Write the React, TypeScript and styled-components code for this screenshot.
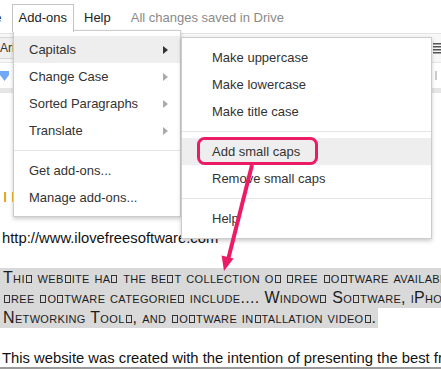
import React from "react";
import styled, { createGlobalStyle } from "styled-components";

const GlobalStyle = createGlobalStyle`
  html, body {
    margin: 0;
    padding: 0;
    background: #fff;
    overflow: hidden;
  }
  body {
    font-family: "Liberation Sans", Arial, sans-serif;
  }
`;

const Screen = styled.div`
  position: relative;
  width: 441px;
  height: 369px;
  overflow: hidden;
  background: #fff;
`;

const MenuBar = styled.div`
  display: flex;
  align-items: flex-start;
  height: 33px;
  border-bottom: 1px solid #e3e3e3;
  font-size: 13px;
  color: #222;
  white-space: nowrap;
`;

const BarItem = styled.div<{ $gap?: number }>`
  margin-top: 4px;
  margin-left: ${(p) => p.$gap ?? 10}px;
  line-height: 27px;
`;

const ActiveTab = styled.div`
  position: relative;
  z-index: 3;
  margin-top: 4px;
  margin-left: 10px;
  height: 27px;
  padding: 0 6px;
  line-height: 25px;
  background: #fff;
  border: 1px solid #c4c4c4;
  border-bottom: none;
`;

const Status = styled(BarItem)`
  color: #8a8a8a;
`;

const Toolbar = styled.div`
  display: flex;
  justify-content: space-between;
  align-items: center;
  height: 28px;
  background: #f7f7f7;
  border-bottom: 1px solid #e6e6e6;
`;

const FontBox = styled.div`
  margin-left: -6px;
  width: 60px;
  height: 20px;
  line-height: 20px;
  padding-left: 5px;
  font-size: 12px;
  color: #333;
  background: #efefef;
  border: 1px solid #d6d6d6;
`;

const Ruler = styled.div`
  display: flex;
  justify-content: space-between;
  height: 17px;
  padding-top: 8px;
  border-bottom: 5px solid #e6e6e6;
`;

const Marker = styled.svg`
  display: block;
`;

const Doc = styled.div`
  padding: 94px 0 0 2px;
  font-size: 14.8px;
  line-height: 20px;
  color: #111;
  white-space: nowrap;
`;

const Title = styled.div`
  color: #cc8400;
  padding-left: 1px;
`;

const Para = styled.div<{ $top: number }>`
  margin-top: ${(p) => p.$top}px;
`;

const SmallCaps = styled.div`
  margin-top: 20px;
  margin-left: -2px;
  font-size: 16px;
  letter-spacing: 0.33px;
  font-variant: small-caps;
  color: #1c1c1c;
`;

const Highlight = styled.span`
  display: inline-block;
  height: 20px;
  padding-left: 3px;
  padding-right: 2px;
  background: #d9d9d9;
`;

const Tofu = styled.span`
  display: inline-block;
  box-sizing: border-box;
  width: 6px;
  height: 8px;
  margin: 0 1px;
  border: 1px solid #333;
`;

const FootShadow = styled.div`
  position: absolute;
  left: 0;
  right: 0;
  bottom: 0;
  height: 2px;
  background: #9a9a9a;
`;

const Menu = styled.div<{ $left: number; $top: number; $width: number; $inset: number }>`
  position: absolute;
  z-index: 2;
  left: ${(p) => p.$left}px;
  top: ${(p) => p.$top}px;
  width: ${(p) => p.$width}px;
  box-sizing: border-box;
  padding: ${(p) => p.$inset}px 0 ${(p) => p.$inset}px;
  background: #fff;
  border: 1px solid rgba(0, 0, 0, 0.2);
  box-shadow: 0 2px 4px rgba(0, 0, 0, 0.2);
  font-size: 13px;
  color: #333;
  white-space: nowrap;
`;

const Item = styled.div<{ $active?: boolean; $pad: number }>`
  display: flex;
  align-items: center;
  justify-content: space-between;
  height: 27px;
  padding: 0 12px 0 ${(p) => p.$pad}px;
  background: ${(p) => (p.$active ? "#eeeeee" : "transparent")};
`;

const Caret = styled.span<{ $dark?: boolean }>`
  width: 0;
  height: 0;
  border-top: 4px solid transparent;
  border-bottom: 4px solid transparent;
  border-left: 5px solid ${(p) => (p.$dark ? "#333" : "#aaa")};
`;

const Separator = styled.div`
  height: 1px;
  margin: 6px 0;
  background: #e5e5e5;
`;

const Callout = styled.svg`
  position: absolute;
  z-index: 4;
  left: 0;
  top: 0;
  pointer-events: none;
`;

const caps = (text: string) =>
  text.split("").map((ch, i) => (ch === "s" || ch === "f" ? <Tofu key={i} /> : ch));

const mainItems = [
  { label: "Capitals", sub: true, active: true },
  { label: "Change Case", sub: true },
  { label: "Sorted Paragraphs", sub: true },
  { label: "Translate", sub: true },
  null,
  { label: "Get add-ons..." },
  { label: "Manage add-ons..." },
];

const subItems = [
  { label: "Make uppercase" },
  { label: "Make lowercase" },
  { label: "Make title case" },
  null,
  { label: "Add small caps", active: true },
  { label: "Remove small caps" },
  null,
  { label: "Help" },
];

export default function App() {
  return (
    <Screen>
      <GlobalStyle />
      <MenuBar>
        <BarItem $gap={-29.5}>Table</BarItem>
        <ActiveTab>Add-ons</ActiveTab>
        <BarItem>Help</BarItem>
        <Status $gap={20}>All changes saved in Drive</Status>
      </MenuBar>
      <Toolbar>
        <FontBox>Arial</FontBox>
        <svg width="12" height="12" viewBox="0 0 12 12" style={{ marginRight: -4 }}>
          {[1, 4, 7, 10].map((y) => (
            <rect key={y} x="0" y={y} width="12" height="1.5" fill="#555" />
          ))}
        </svg>
      </Toolbar>
      <Ruler>
        <Marker width="9" height="11" viewBox="0 0 9 11">
          <path d="M0 0H9V4L4.5 10L0 4Z" fill="#6fa8f5" />
        </Marker>
        <Marker width="8" height="10" viewBox="0 0 8 10">
          <rect x="2" y="0" width="2" height="9" fill="#ccc" />
        </Marker>
      </Ruler>
      <Doc>
        <Title>I Love Free Software</Title>
        <Para $top={21}>http://www.ilovefreesoftware.com</Para>
        <SmallCaps>
          <div>
            <Highlight>
              {caps("This website has the best collection of free software available on the web.")}
            </Highlight>
          </div>
          <div>
            <Highlight>
              {caps("free software categories include.... Windows Software, iPhone Apps, Android Apps,")}
            </Highlight>
          </div>
          <div>
            <Highlight>{caps("Networking Tools, and software installation videos.")}</Highlight>
          </div>
        </SmallCaps>
        <Para $top={20}>
          This website was created with the intention of presenting the best free software
        </Para>
      </Doc>
      <FootShadow />

      <Menu $left={13} $top={30} $width={168} $inset={5}>
        {mainItems.map((it, i) =>
          it ? (
            <Item key={i} $pad={15} $active={it.active}>
              <span>{it.label}</span>
              {it.sub && <Caret $dark={it.active} />}
            </Item>
          ) : (
            <Separator key={i} />
          )
        )}
      </Menu>

      <Menu $left={181} $top={37} $width={251} $inset={6}>
        {subItems.map((it, i) =>
          it ? (
            <Item key={i} $pad={30} $active={it.active}>
              <span>{it.label}</span>
            </Item>
          ) : (
            <Separator key={i} />
          )
        )}
      </Menu>

      <Callout width="441" height="369" viewBox="0 0 441 369">
        <rect x="198.5" y="138.5" width="118" height="25" rx="6" fill="none" stroke="#ec1b66" strokeWidth="3" />
        <line x1="252" y1="165" x2="228.5" y2="258" stroke="#ec1b66" strokeWidth="4" />
        <polygon points="224,271 233.6,258.6 221.6,255.4" fill="#ec1b66" />
      </Callout>
    </Screen>
  );
}
